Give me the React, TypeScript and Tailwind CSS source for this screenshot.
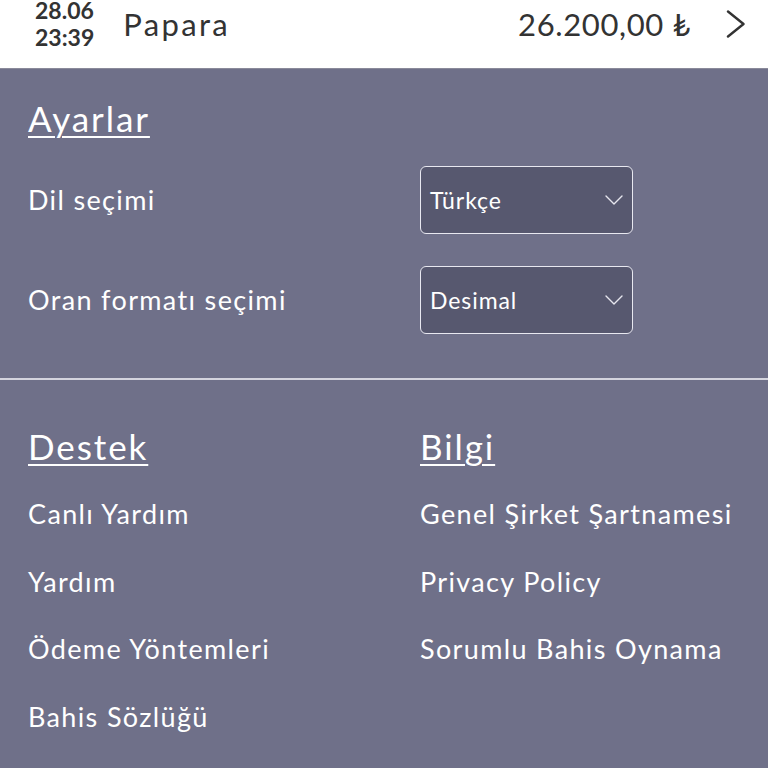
const destek = ["Canlı Yardım", "Yardım", "Ödeme Yöntemleri", "Bahis Sözlüğü"];
const bilgi = ["Genel Şirket Şartnamesi", "Privacy Policy", "Sorumlu Bahis Oynama"];

function SelectBox({ value }: { value: string }) {
  return (
    <div className="flex h-[68px] w-[213px] items-center justify-between rounded-[6px] border-[1.5px] border-[#e8e8f0] bg-[#57586f] pl-[9px] pr-[8px]">
      <span className="text-[23px] tracking-[0.04em] text-white">{value}</span>
      <svg width="18" height="10" viewBox="0 0 18 10" fill="none" className="mr-[1px]">
        <polyline points="1,1 9,9 17,1" stroke="#e6e6ee" strokeWidth="1.4" strokeLinecap="round" strokeLinejoin="round" />
      </svg>
    </div>
  );
}

export default function App() {
  return (
    <div className="min-h-[768px] bg-[#6f7089] font-['Lato',sans-serif] text-white">
      <header className="h-[69px] border-b border-[#8a8a9a] bg-white">
        <div className="flex h-[48px] items-center pl-[35px] pr-[22px] text-[#333333]">
          <div className="flex flex-col text-[23px] font-bold leading-[27px]">
            <span>28.06</span>
            <span>23:39</span>
          </div>
          <span className="ml-[29px] text-[31px] tracking-[0.075em]">Papara</span>
          <span className="ml-auto text-[31px] tracking-[0.02em]">26.200,00 ₺</span>
          <svg width="20" height="28" viewBox="0 0 20 28" fill="none" className="ml-[35px]">
            <polyline points="2,1.5 17.5,14 2,26.5" stroke="#333333" strokeWidth="2.4" strokeLinecap="round" strokeLinejoin="round" />
          </svg>
        </div>
      </header>

      <section className="px-[28px] pb-[44px] pt-[27px]">
        <h2 className="text-[35px] leading-[44px] tracking-[0.055em] underline decoration-[2px] underline-offset-[4px]">
          Ayarlar
        </h2>
        <div className="mt-[26px] flex flex-col gap-[32px]">
          <div className="flex items-center">
            <span className="w-[392px] text-[27px] tracking-[0.05em]">Dil seçimi</span>
            <SelectBox value="Türkçe" />
          </div>
          <div className="flex items-center">
            <span className="w-[392px] text-[27px] tracking-[0.05em]">Oran formatı seçimi</span>
            <SelectBox value="Desimal" />
          </div>
        </div>
      </section>

      <div className="h-[2px] bg-[#d4d4de]" />

      <section className="grid grid-cols-[392px_1fr] px-[28px] pt-[44px]">
        {[
          { title: "Destek", items: destek },
          { title: "Bilgi", items: bilgi },
        ].map((col) => (
          <div key={col.title} className="flex flex-col">
            <h2 className="text-[35px] leading-[44px] tracking-[0.055em] underline decoration-[2px] underline-offset-[4px]">
              {col.title}
            </h2>
            <ul className="mt-[29px] flex flex-col">
              {col.items.map((item) => (
                <li key={item} className="h-[67.5px] text-[27px] leading-[34px] tracking-[0.05em]">
                  {item}
                </li>
              ))}
            </ul>
          </div>
        ))}
      </section>
    </div>
  );
}
